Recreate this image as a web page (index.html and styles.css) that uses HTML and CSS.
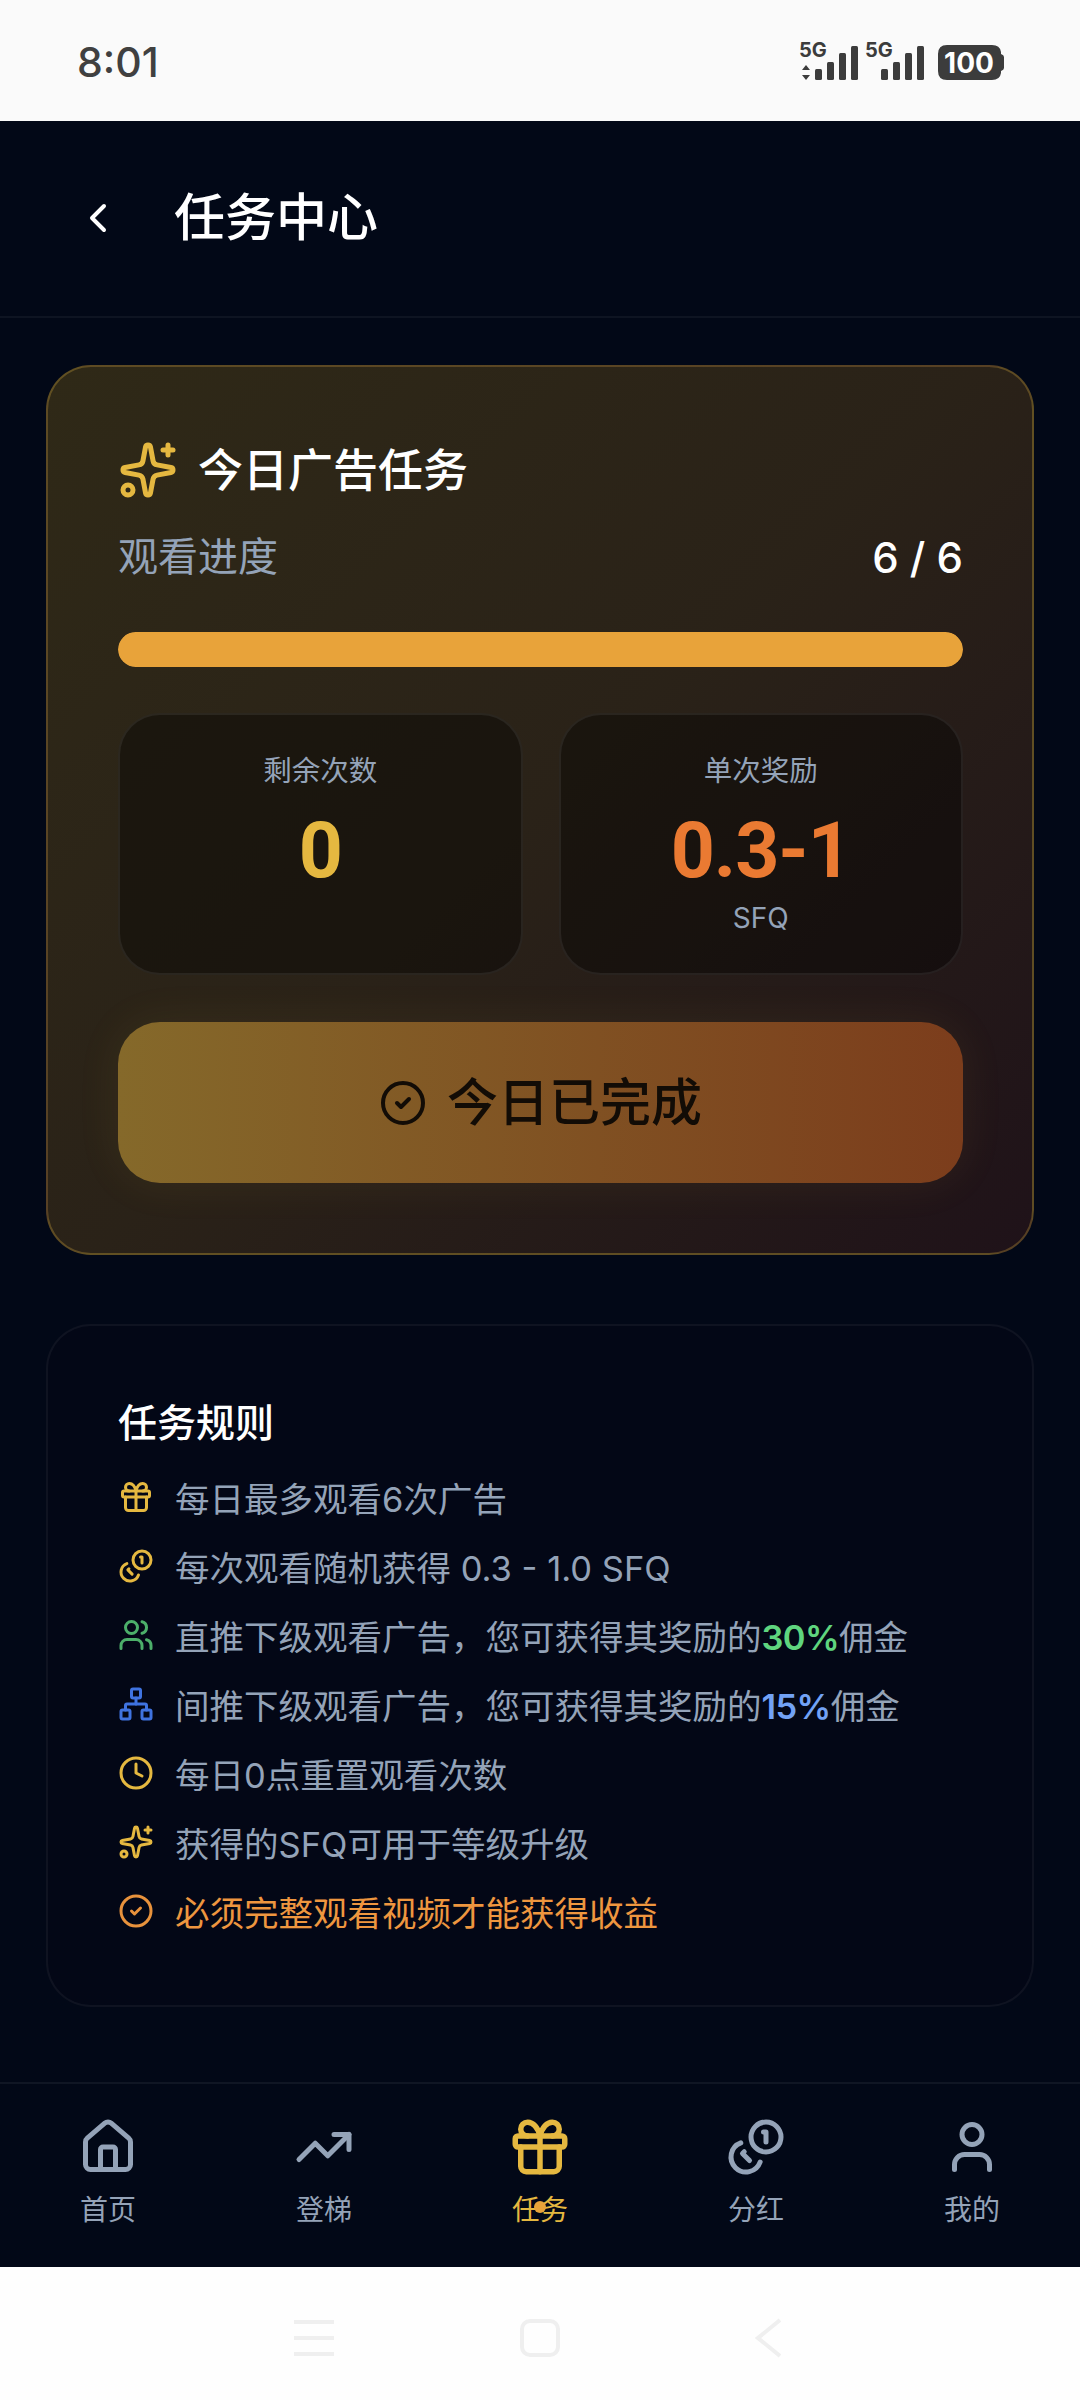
FILE: index.html
```html
<!DOCTYPE html>
<html lang="zh-CN">
  <head>
    <meta charset="UTF-8" />
    <title>任务中心</title>
    <link rel="stylesheet" href="styles.css">
  </head>
  <body>
    <div class="phone">
      <div class="status-bar">
        <span class="time">8:01</span>
        <svg class="status-icons" width="205" height="60" viewBox="0 -8 205 60">
          <text class="net-label" x="0" y="17">5G</text>
          <path d="M7 25l4 5H3z M7 40l4-5H3z" />
          <rect x="16" y="29" width="7" height="11" rx="1.5" />
          <rect x="28" y="22" width="7" height="18" rx="1.5" />
          <rect x="40" y="13" width="7" height="27" rx="1.5" />
          <rect x="52" y="6" width="7" height="34" rx="1.5" />
          <text class="net-label" x="66" y="17">5G</text>
          <rect x="82" y="29" width="7" height="11" rx="1.5" />
          <rect x="94" y="22" width="7" height="18" rx="1.5" />
          <rect x="106" y="13" width="7" height="27" rx="1.5" />
          <rect x="118" y="6" width="7" height="34" rx="1.5" />
          <path d="M148 5h45q8 0 9 7v2q3 1 3 3v11q0 2-3 3v2q-1 7-9 7h-45q-9 0-9-9v-17q0-9 9-9z" />
          <text class="battery-label" x="170" y="33">100</text>
        </svg>
      </div>

      <header class="top-bar">
        <svg class="back-icon ic" viewBox="0 0 24 24"><path d="m15 18-6-6 6-6" /></svg>
        <h1>任务中心</h1>
      </header>

      <main class="content">
        <section class="task-card">
          <div class="task-title">
            <svg class="title-icon ic" viewBox="0 0 24 24"><path d="M11.017 2.814a1 1 0 0 1 1.966 0l1.051 5.558a2 2 0 0 0 1.594 1.594l5.558 1.051a1 1 0 0 1 0 1.966l-5.558 1.051a2 2 0 0 0-1.594 1.594l-1.051 5.558a1 1 0 0 1-1.966 0l-1.051-5.558a2 2 0 0 0-1.594-1.594l-5.558-1.051a1 1 0 0 1 0-1.966l5.558-1.051a2 2 0 0 0 1.594-1.594z" /><path d="M20 2v4" /><path d="M22 4h-4" /><circle cx="4" cy="20" r="2" /></svg>
            <h2>今日广告任务</h2>
          </div>
          <div class="progress-row">
            <span class="progress-label">观看进度</span>
            <span class="progress-count">6 / 6</span>
          </div>
          <div class="progress-bar"><div class="progress-fill"></div></div>
          <div class="stats">
            <div class="stat">
              <div class="stat-label">剩余次数</div>
              <div class="stat-value gold">0</div>
            </div>
            <div class="stat">
              <div class="stat-label">单次奖励</div>
              <div class="stat-value orange">0.3-1</div>
              <div class="stat-unit">SFQ</div>
            </div>
          </div>
          <button class="done-btn" type="button">
            <svg class="done-icon ic" viewBox="0 0 24 24"><circle cx="12" cy="12" r="10" /><path d="m9 12 2 2 4-4" /></svg>
            <span class="done-text">今日已完成</span>
          </button>
        </section>

        <section class="rules-card">
          <h3>任务规则</h3>
          <ul class="rules">
            <li>
              <svg class="rule-icon ic c-gold" viewBox="0 0 24 24"><rect x="3" y="8" width="18" height="4" rx="1" /><path d="M12 8v13" /><path d="M19 12v7a2 2 0 0 1-2 2H7a2 2 0 0 1-2-2v-7" /><path d="M7.5 8a2.5 2.5 0 0 1 0-5A4.8 8 0 0 1 12 8a4.8 8 0 0 1 4.5-5 2.5 2.5 0 0 1 0 5" /></svg>
              <span>每日最多观看6次广告</span>
            </li>
            <li>
              <svg class="rule-icon ic c-gold" viewBox="0 0 24 24"><circle cx="16" cy="8" r="6" /><path d="M5.91 10.37A6 6 0 1 0 13.66 18" /><path d="M15 6h1v4" /><path d="m7.29 13.88-.7.71 2.82 2.82" /></svg>
              <span>每次观看随机获得 0.3 - 1.0 SFQ</span>
            </li>
            <li>
              <svg class="rule-icon ic c-green" viewBox="0 0 24 24"><path d="M16 21v-2a4 4 0 0 0-4-4H6a4 4 0 0 0-4 4v2" /><circle cx="9" cy="7" r="4" /><path d="M22 21v-2a4 4 0 0 0-3-3.87" /><path d="M16 3.13a4 4 0 0 1 0 7.75" /></svg>
              <span>直推下级观看广告，您可获得其奖励的<b class="hl-green">30%</b>佣金</span>
            </li>
            <li>
              <svg class="rule-icon ic c-blue" viewBox="0 0 24 24"><rect x="16" y="16" width="6" height="6" rx="1" /><rect x="2" y="16" width="6" height="6" rx="1" /><rect x="9" y="2" width="6" height="6" rx="1" /><path d="M5 16v-3a1 1 0 0 1 1-1h12a1 1 0 0 1 1 1v3" /><path d="M12 12V8" /></svg>
              <span>间推下级观看广告，您可获得其奖励的<b class="hl-blue">15%</b>佣金</span>
            </li>
            <li>
              <svg class="rule-icon ic c-gold" viewBox="0 0 24 24"><circle cx="12" cy="12" r="10" /><path d="M12 6v6l4 2" /></svg>
              <span>每日0点重置观看次数</span>
            </li>
            <li>
              <svg class="rule-icon ic c-gold" viewBox="0 0 24 24"><path d="M11.017 2.814a1 1 0 0 1 1.966 0l1.051 5.558a2 2 0 0 0 1.594 1.594l5.558 1.051a1 1 0 0 1 0 1.966l-5.558 1.051a2 2 0 0 0-1.594 1.594l-1.051 5.558a1 1 0 0 1-1.966 0l-1.051-5.558a2 2 0 0 0-1.594-1.594l-5.558-1.051a1 1 0 0 1 0-1.966l5.558-1.051a2 2 0 0 0 1.594-1.594z" /><path d="M20 2v4" /><path d="M22 4h-4" /><circle cx="4" cy="20" r="2" /></svg>
              <span>获得的SFQ可用于等级升级</span>
            </li>
            <li class="rule-warn">
              <svg class="rule-icon ic c-orange" viewBox="0 0 24 24"><circle cx="12" cy="12" r="10" /><path d="m9 12 2 2 4-4" /></svg>
              <span>必须完整观看视频才能获得收益</span>
            </li>
          </ul>
        </section>
      </main>

      <nav class="tabs">
        <div class="tab">
          <svg class="tab-icon ic" viewBox="0 0 24 24"><path d="M15 21v-8a1 1 0 0 0-1-1h-4a1 1 0 0 0-1 1v8" /><path d="M3 10a2 2 0 0 1 .709-1.528l7-5.999a2 2 0 0 1 2.582 0l7 5.999A2 2 0 0 1 21 10v9a2 2 0 0 1-2 2H5a2 2 0 0 1-2-2z" /></svg>
          <span>首页</span>
        </div>
        <div class="tab">
          <svg class="tab-icon ic" viewBox="0 0 24 24"><path d="M22 7 13.5 15.5 8.5 10.5 2 17" /><path d="M16 7h6v6" /></svg>
          <span>登梯</span>
        </div>
        <div class="tab active">
          <svg class="tab-icon ic" viewBox="0 0 24 24"><rect x="3" y="8" width="18" height="4" rx="1" /><path d="M12 8v13" /><path d="M19 12v7a2 2 0 0 1-2 2H7a2 2 0 0 1-2-2v-7" /><path d="M7.5 8a2.5 2.5 0 0 1 0-5A4.8 8 0 0 1 12 8a4.8 8 0 0 1 4.5-5 2.5 2.5 0 0 1 0 5" /></svg>
          <span>任务</span>
          <i class="tab-dot"></i>
        </div>
        <div class="tab">
          <svg class="tab-icon ic" viewBox="0 0 24 24"><circle cx="16" cy="8" r="6" /><path d="M5.91 10.37A6 6 0 1 0 13.66 18" /><path d="M15 6h1v4" /><path d="m7.29 13.88-.7.71 2.82 2.82" /></svg>
          <span>分红</span>
        </div>
        <div class="tab">
          <svg class="tab-icon ic" viewBox="0 0 24 24"><path d="M19 21v-2a4 4 0 0 0-4-4H9a4 4 0 0 0-4 4v2" /><circle cx="12" cy="7" r="4" /></svg>
          <span>我的</span>
        </div>
      </nav>

      <div class="system-nav">
        <svg width="40" height="38" viewBox="0 0 40 38"><path d="M0 3h40M0 19h40M0 35h40" /></svg>
        <svg width="40" height="38" viewBox="0 0 40 38"><rect x="2" y="2" width="36" height="34" rx="8" /></svg>
        <svg class="sys-back" width="26" height="40" viewBox="0 0 26 40"><path d="M25 2 3 20l22 18" /></svg>
      </div>
    </div>
  </body>
</html>
```

FILE: styles.css
```css
:root {
  --bg: #020817;
  --gold: #e5b840;
  --orange: #ea7a32;
  --muted: #94a3b8;
  --font: Inter, "Noto Sans CJK SC", sans-serif;
}
* {
  box-sizing: border-box;
}
body {
  margin: 0;
  background: var(--bg);
  font-family: var(--font);
}
h1,
h2,
h3,
ul {
  margin: 0;
  padding: 0;
}
.phone {
  width: 1080px;
  height: 2400px;
  display: flex;
  flex-direction: column;
  overflow: hidden;
}
.ic {
  fill: none;
  stroke: currentColor;
  stroke-width: 2;
  stroke-linecap: round;
  stroke-linejoin: round;
  flex-shrink: 0;
}

/* status bar */
.status-bar {
  height: 121px;
  background: #fafafa;
  display: flex;
  align-items: center;
  justify-content: space-between;
  padding: 0 76px 0 77px;
}
.time {
  font-size: 41px;
  font-weight: 500;
  line-height: 50px;
  margin-top: 2px;
  color: #404040;
}
.status-icons {
  fill: #3c3c3c;
  margin-top: 3px;
}
.net-label {
  font-family: Inter, sans-serif;
  font-size: 20px;
  font-weight: 700;
}
.battery-label {
  font-family: Inter, sans-serif;
  font-size: 28px;
  font-weight: 700;
  fill: #fff;
  text-anchor: middle;
}

/* header */
.top-bar {
  height: 197px;
  flex-shrink: 0;
  display: flex;
  align-items: center;
  gap: 52px;
  padding-left: 74px;
  padding-bottom: 2px;
  border-bottom: 2px solid rgba(255, 255, 255, 0.05);
  color: #fff;
}
.back-icon {
  width: 48px;
  height: 48px;
}
.top-bar h1 {
  font-size: 51px;
  font-weight: 500;
  line-height: 60px;
}

/* main */
.content {
  flex: 1;
  padding: 47px 46px 0;
}
.task-card {
  height: 890px;
  padding: 70px 69px 0 70px;
  border: 2px solid rgba(229, 184, 64, 0.28);
  border-radius: 45px;
  background: linear-gradient(135deg, #2f2917 0%, #2a2218 50%, #1f1219 100%);
}
.task-title {
  display: flex;
  align-items: center;
  gap: 20px;
  height: 66px;
  color: #fff;
}
.title-icon {
  width: 60px;
  height: 60px;
  color: var(--gold);
}
.task-title h2 {
  font-size: 45px;
  font-weight: 500;
  margin-top: -6px;
}
.progress-row {
  display: flex;
  justify-content: space-between;
  align-items: center;
  height: 54px;
  margin-top: 27px;
  font-size: 40px;
  color: var(--muted);
}
.progress-label {
  margin-top: -6px;
}
.progress-count {
  color: #fff;
  font-size: 42px;
  font-weight: 500;
}
.progress-bar {
  height: 35px;
  margin-top: 48px;
  border-radius: 18px;
  background: rgba(255, 255, 255, 0.08);
  overflow: hidden;
}
.progress-fill {
  height: 100%;
  background: #e8a33a;
  border-radius: 18px;
}
.stats {
  display: grid;
  grid-template-columns: 1fr 1fr;
  gap: 36px;
  height: 262px;
  margin-top: 46px;
}
.stat {
  padding-top: 36px;
  text-align: center;
  border: 2px solid rgba(255, 255, 255, 0.07);
  border-radius: 42px;
  background: rgba(0, 0, 0, 0.38);
}
.stat-label {
  font-size: 28.5px;
  line-height: 40px;
  color: var(--muted);
}
.stat-value {
  margin-top: 20px;
  font-family: Roboto, sans-serif;
  font-size: 77px;
  font-weight: 700;
  line-height: 80px;
  letter-spacing: -1px;
}
.gold {
  color: var(--gold);
}
.orange {
  color: var(--orange);
}
.stat-unit {
  margin-top: 7px;
  font-size: 28px;
  line-height: 40px;
  color: var(--muted);
}
.done-btn {
  display: flex;
  align-items: center;
  justify-content: center;
  gap: 20px;
  width: 100%;
  height: 161px;
  margin-top: 47px;
  border: 0;
  border-radius: 42px;
  background: linear-gradient(90deg, #85692a 0%, #7c3d1c 100%);
  box-shadow: 0 0 45px rgba(229, 184, 64, 0.08);
  font-family: var(--font);
  font-size: 51px;
  font-weight: 500;
  color: #120c06;
}
.done-text {
  margin-bottom: 8px;
}
.done-icon {
  width: 48px;
  height: 48px;
}

/* rules */
.rules-card {
  height: 683px;
  margin-top: 69px;
  padding: 70px 70px 0;
  border: 2px solid rgba(255, 255, 255, 0.05);
  border-radius: 45px;
  background: #030716;
}
.rules-card h3 {
  font-size: 39px;
  font-weight: 500;
  line-height: 54px;
  color: #fff;
}
.rules {
  list-style: none;
  margin-top: 12px;
}
.rules li {
  display: flex;
  align-items: center;
  gap: 21px;
  height: 69px;
  font-size: 34.5px;
  color: var(--muted);
}
.rule-icon {
  width: 36px;
  height: 36px;
}
.c-gold {
  color: var(--gold);
}
.c-green {
  color: #4caf6a;
}
.c-blue {
  color: #3f73e0;
}
.c-orange {
  color: #e8923c;
}
.hl-green {
  font-weight: 600;
  letter-spacing: -0.6px;
  color: #5fd57f;
}
.hl-blue {
  font-weight: 600;
  letter-spacing: -0.6px;
  color: #72a2f5;
}
.rules li.rule-warn {
  color: #ee963f;
}

/* tab bar */
.tabs {
  height: 185px;
  display: grid;
  grid-template-columns: repeat(5, 1fr);
  border-top: 2px solid rgba(255, 255, 255, 0.06);
  background: var(--bg);
}
.tab {
  position: relative;
  display: flex;
  flex-direction: column;
  align-items: center;
  gap: 15px;
  padding-top: 33px;
  font-size: 28px;
  line-height: 36px;
  color: var(--muted);
}
.tab-icon {
  width: 60px;
  height: 60px;
}
.tab.active {
  color: var(--gold);
}
.tab.active .tab-icon {
  transform: scale(1.1);
}
.tab-dot {
  position: absolute;
  left: 102px;
  top: 117px;
  width: 12px;
  height: 12px;
  border-radius: 50%;
  background: #e8a33a;
}

/* android nav */
.system-nav {
  height: 133px;
  background: #fefefe;
  display: flex;
  justify-content: center;
  align-items: center;
  gap: 186px;
  padding-right: 5px;
  padding-top: 8px;
}
.system-nav svg {
  fill: none;
  stroke: #efefef;
  stroke-width: 4;
}
.system-nav .sys-back {
  margin-left: 9px;
}
```
